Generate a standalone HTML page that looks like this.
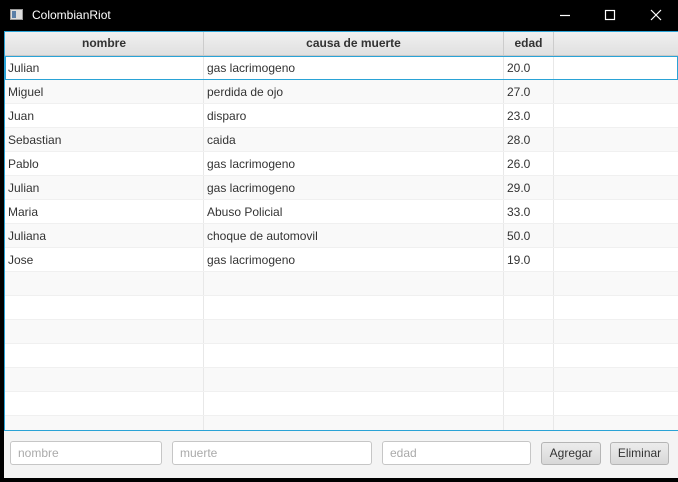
<!DOCTYPE html><html><head><style>
*{margin:0;padding:0;box-sizing:border-box}
body{width:678px;height:482px;background:#000;position:relative;overflow:hidden;font-family:"Liberation Sans",sans-serif;font-size:12px;color:#333}
.t{position:absolute;left:32px;top:8px;color:#fff;font-size:12px}
.tbl{position:absolute;left:4px;top:31px;width:676px;height:400px;background:#fff;border:1px solid #2aa3d6;border-right:none;overflow:hidden}
.hd{height:24px;background:linear-gradient(#f0f0f0,#e0e0e0);border-bottom:1px solid #c8c8c8;position:relative;font-weight:bold}
.r{height:24px;position:relative;border-bottom:1px solid #f0f0f0}
.r:nth-child(even){background:#f9f9f9}
.c{position:absolute;top:0;height:100%;line-height:24px;padding-left:3px;border-right:1px solid #e8e8e8}
.hd .c{text-align:center;padding:0;border-right:1px solid #ccc;line-height:23px}
.c1{left:0;width:199px}.c2{left:199px;width:300px}.c3{left:499px;width:50px}.c4{left:549px;width:130px;border-right:none}
.f{position:absolute;left:0;top:0;width:673px;height:24px;border:1px solid #2aa3d6}
.bot{position:absolute;left:4px;top:431px;width:676px;height:47px;background:#f4f4f4}
.in{position:absolute;top:10px;height:24px;background:#fff;border:1px solid #c6c6c6;border-radius:3px;color:#aaa;line-height:22px;padding-left:7px}
.b{position:absolute;top:11px;height:23px;background:linear-gradient(#ececec,#d8d8d8);border:1px solid #b5b5b5;border-radius:3px;text-align:center;line-height:21px;color:#333}
</style></head><body>
<svg style="position:absolute;left:10px;top:9px" width="13" height="11"><rect x=".5" y=".5" width="12" height="10" fill="#ddd" stroke="#999"/><rect x="2" y="2" width="4" height="7" fill="#5a7fa8"/></svg>
<div class="t">ColombianRiot</div>
<svg style="position:absolute;left:560px;top:8px" width="110" height="16" stroke="#fff" fill="none" stroke-width="1.2"><line x1="0" y1="7.5" x2="10" y2="7.5"/><rect x="45.5" y="2.5" width="9" height="9"/><path d="M91 2l10 10M101 2l-10 10"/></svg>
<div class="tbl">
<div class="hd"><div class="c c1">nombre</div><div class="c c2">causa de muerte</div><div class="c c3">edad</div><div class="c c4"></div></div>
<div>
<div class="r"><div class="c c1">Julian</div><div class="c c2">gas lacrimogeno</div><div class="c c3">20.0</div><div class="c c4"></div><div class="f"></div></div>
<div class="r"><div class="c c1">Miguel</div><div class="c c2">perdida de ojo</div><div class="c c3">27.0</div><div class="c c4"></div></div>
<div class="r"><div class="c c1">Juan</div><div class="c c2">disparo</div><div class="c c3">23.0</div><div class="c c4"></div></div>
<div class="r"><div class="c c1">Sebastian</div><div class="c c2">caida</div><div class="c c3">28.0</div><div class="c c4"></div></div>
<div class="r"><div class="c c1">Pablo</div><div class="c c2">gas lacrimogeno</div><div class="c c3">26.0</div><div class="c c4"></div></div>
<div class="r"><div class="c c1">Julian</div><div class="c c2">gas lacrimogeno</div><div class="c c3">29.0</div><div class="c c4"></div></div>
<div class="r"><div class="c c1">Maria</div><div class="c c2">Abuso Policial</div><div class="c c3">33.0</div><div class="c c4"></div></div>
<div class="r"><div class="c c1">Juliana</div><div class="c c2">choque de automovil</div><div class="c c3">50.0</div><div class="c c4"></div></div>
<div class="r"><div class="c c1">Jose</div><div class="c c2">gas lacrimogeno</div><div class="c c3">19.0</div><div class="c c4"></div></div>
<div class="r"><div class="c c1"></div><div class="c c2"></div><div class="c c3"></div></div>
<div class="r"><div class="c c1"></div><div class="c c2"></div><div class="c c3"></div></div>
<div class="r"><div class="c c1"></div><div class="c c2"></div><div class="c c3"></div></div>
<div class="r"><div class="c c1"></div><div class="c c2"></div><div class="c c3"></div></div>
<div class="r"><div class="c c1"></div><div class="c c2"></div><div class="c c3"></div></div>
<div class="r"><div class="c c1"></div><div class="c c2"></div><div class="c c3"></div></div>
<div class="r"><div class="c c1"></div><div class="c c2"></div><div class="c c3"></div></div>
</div></div>
<div style="position:absolute;left:4px;top:430px;width:676px;height:2px;background:#2aa3d6"></div>
<div class="bot">
<div class="in" style="left:6px;width:152px">nombre</div>
<div class="in" style="left:168px;width:200px">muerte</div>
<div class="in" style="left:378px;width:149px">edad</div>
<div class="b" style="left:537px;width:60px">Agregar</div>
<div class="b" style="left:606px;width:59px">Eliminar</div>
</div>
</body></html>
